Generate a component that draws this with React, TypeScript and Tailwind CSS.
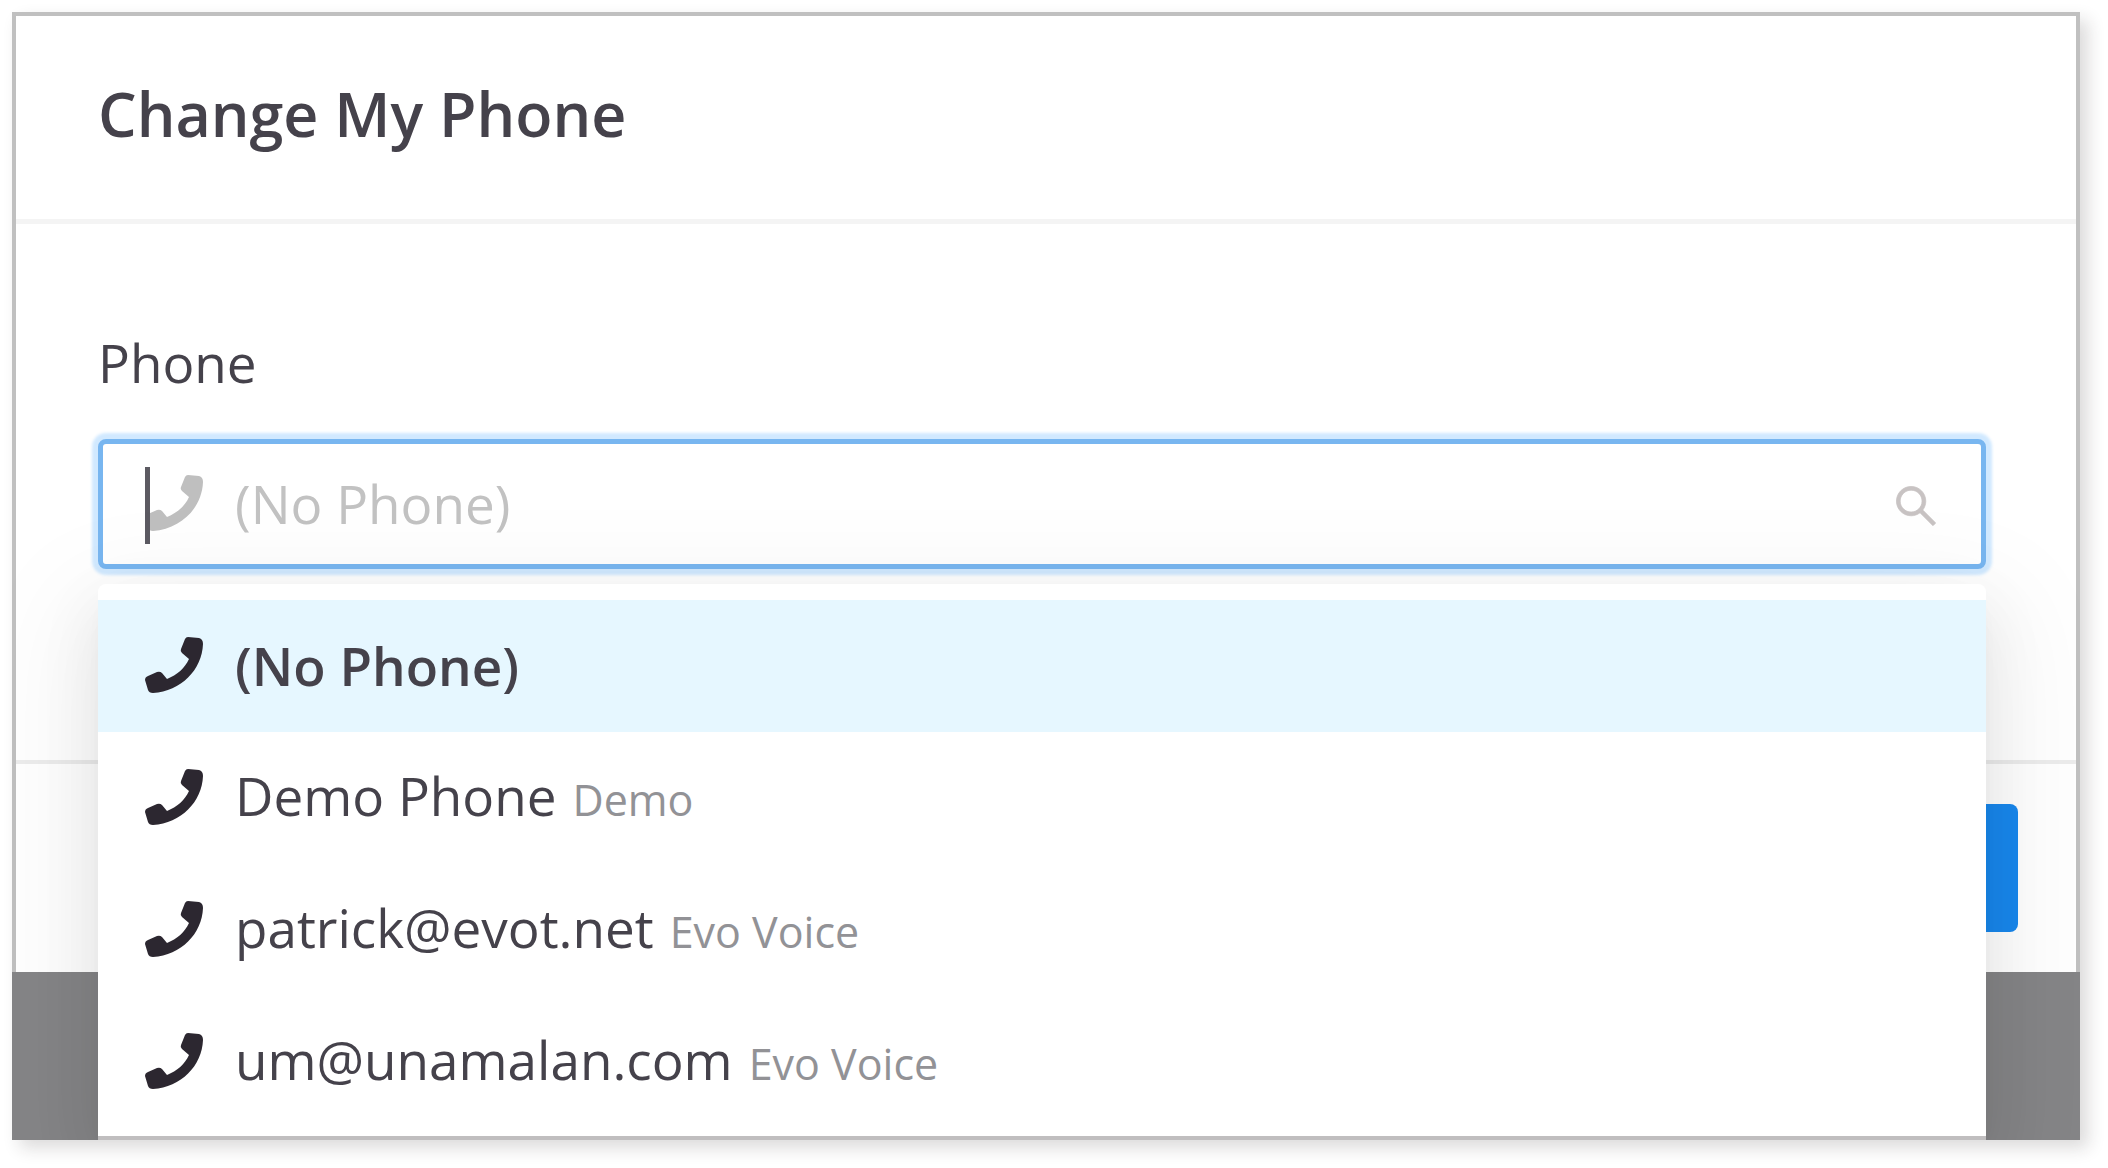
import React, { useState } from "react";
import { AiOutlineSearch } from "react-icons/ai";

type PhoneOption = {
  name: string;
  customer?: string;
};

const options: PhoneOption[] = [
  { name: "(No Phone)" },
  { name: "Demo Phone", customer: "Demo" },
  { name: "patrick@evot.net", customer: "Evo Voice" },
  { name: "um@unamalan.com", customer: "Evo Voice" },
];

const PhoneIcon = ({ className }: { className: string }) => (
  <svg viewBox="0 0 58 58" fill="currentColor" aria-hidden="true" className={className}>
    <path d="M43 0 54 1Q58 2 58 7C57 33 36 54 8 56Q4 56 3 53L0 43Q0 40 3 39L12 35Q15 34 17 36L22 42C32 38 40 31 44 22L37 16Q35 14 36 12L40 2Q41 0 43 0Z" />
  </svg>
);

const PhoneSelect = () => {
  const [selected, setSelected] = useState(0);

  return (
    <div className="relative">
      {/* search box */}
      <div className="flex h-[130px] items-center rounded-lg border-[5px] border-[#78b6f0] bg-white pr-10 pl-[42px] shadow-[0_0_3px_6px_rgba(24,144,255,0.2)]">
        <div className="relative mr-8 shrink-0">
          <PhoneIcon className="size-[58px] text-[#bfbfbf]" />
          <span className="absolute -top-2 left-0 h-[77px] w-[5px] bg-[#5c5a62]" />
        </div>
        <input
          id="phone"
          type="text"
          placeholder="(No Phone)"
          className="min-w-0 flex-1 bg-transparent outline-none placeholder:text-[#c2c2c2]"
        />
        <AiOutlineSearch className="mt-1 size-[50px] shrink-0 stroke-[#c8c3c3] stroke-[16] text-[#c8c3c3]" />
      </div>

      {/* dropdown */}
      <ul
        role="listbox"
        aria-label="Phone"
        className="absolute inset-x-0 top-full z-10 mt-[15px] rounded-t-lg border-b-4 border-[#c0bebf] bg-white pt-4 pb-2 shadow-[0_12px_24px_-16px_rgba(0,0,0,0.12),0_24px_64px_0_rgba(0,0,0,0.08),0_36px_112px_32px_rgba(0,0,0,0.05)]"
      >
        {options.map((option, i) => (
          <li key={option.name} role="option" aria-selected={i === selected}>
            <button
              type="button"
              onClick={() => setSelected(i)}
              className={
                i === selected
                  ? "flex h-[132px] w-full items-center bg-[#e6f7ff] pl-[47px] text-left font-semibold"
                  : "flex h-[132px] w-full items-center pl-[47px] text-left"
              }
            >
              <PhoneIcon className="mr-8 size-[58px] shrink-0 text-[#2c2730]" />
              <span>
                {option.name}
                {option.customer && (
                  <small className="ml-4 text-[43px] text-[#929296]">{option.customer}</small>
                )}
              </span>
            </button>
          </li>
        ))}
      </ul>
    </div>
  );
};

const App = () => {
  return (
    <div className="bg-white pt-3 pr-7 pb-7 pl-3 font-['Open_Sans','Noto_Sans',sans-serif] text-[53px] leading-[80px] text-[#45424b]">
      <div className="shadow-[8px_8px_16px_rgba(35,31,32,0.16)]">
        <div className="overflow-hidden bg-[#858587]">
          <div role="dialog" aria-labelledby="title" className="border-4 border-b-0 border-[#c0c0c0] bg-white">
            <header className="border-b-[5px] border-[#f4f4f4] px-[82px] pt-[58px] pb-[65px]">
              <h1 id="title" className="text-[61px] font-semibold">Change My Phone</h1>
            </header>

            <div className="h-[536px] px-[82px] pt-[99px] pr-[90px]">
              <label htmlFor="phone" className="mb-[36px] block">Phone</label>
              <PhoneSelect />
            </div>

            <footer className="flex justify-end border-t-4 border-[#ececec] px-[58px] py-10">
              <button type="button" aria-label="Save" className="h-32 w-60 rounded-lg bg-[#1888ee]" />
            </footer>
          </div>

          {/* dimmed page behind the dialog */}
          <div className="h-[168px]" />
        </div>
      </div>
    </div>
  );
};

export default App;
